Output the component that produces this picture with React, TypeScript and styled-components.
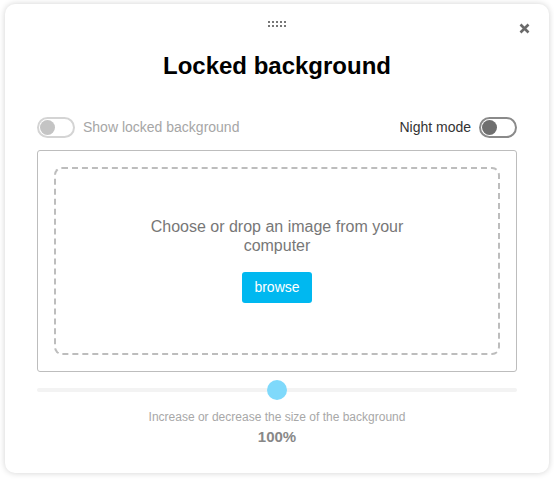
import React from "react";
import styled, { createGlobalStyle } from "styled-components";

const Global = createGlobalStyle`
  html, body { margin: 0; padding: 0; background: #ffffff; }
  body { font-family: "Liberation Sans", Arial, sans-serif; }
  * { box-sizing: border-box; }
`;

const Page = styled.div`
  width: 554px;
  height: 483px;
  padding: 4px 5px 10px 5px;
`;

const Card = styled.div`
  position: relative;
  width: 544px;
  height: 469px;
  background: #fff;
  border-radius: 10px;
  box-shadow: 0 0 6px rgba(0, 0, 0, 0.18);
  padding: 17px 32px 0 32px;
  display: flex;
  flex-direction: column;
`;

const Handle = styled.div`
  align-self: center;
  display: grid;
  grid-template-columns: repeat(5, 2px);
  grid-auto-rows: 2px;
  gap: 2px 2px;
  span { background: #777; display: block; }
`;

const Close = styled.button`
  position: absolute;
  top: 16px;
  right: 17px;
  width: 16px;
  height: 16px;
  padding: 0;
  border: none;
  background: none;
  display: flex;
  align-items: center;
  justify-content: center;
`;

const Title = styled.h1`
  margin: 25px 0 0 0;
  text-align: center;
  font-size: 24px;
  font-weight: 700;
  color: #000;
  line-height: 28px;
`;

const ToggleRow = styled.div`
  margin-top: 37px;
  display: flex;
  align-items: center;
  justify-content: space-between;
  height: 20px;
`;

const ToggleGroup = styled.label<{ $muted?: boolean }>`
  display: flex;
  align-items: center;
  gap: 8px;
  font-size: 14px;
  color: ${(p) => (p.$muted ? "#a6a6a6" : "#333")};
`;

const Switch = styled.span<{ $dark?: boolean }>`
  position: relative;
  width: 38px;
  height: 21px;
  border-radius: 11px;
  border: 2px solid ${(p) => (p.$dark ? "#8a8a8a" : "#d4d4d4")};
  background: #fff;
  &::after {
    content: "";
    position: absolute;
    left: 1px;
    top: 1px;
    width: 15px;
    height: 15px;
    border-radius: 50%;
    background: ${(p) => (p.$dark ? "#6f6f6f" : "#c4c4c4")};
  }
`;

const DropOuter = styled.div`
  margin-top: 13px;
  height: 222px;
  border: 1px solid #bdbdbd;
  border-radius: 3px;
  padding: 16px;
`;

const DropInner = styled.div`
  height: 100%;
  border: 2px dashed #bdbdbd;
  border-radius: 8px;
  display: flex;
  flex-direction: column;
  align-items: center;
  justify-content: center;
  padding-bottom: 3px;
`;

const DropText = styled.p`
  margin: 0;
  width: 270px;
  text-align: center;
  font-size: 16px;
  line-height: 19px;
  color: #777;
`;

const Browse = styled.button`
  margin-top: 17px;
  width: 70px;
  height: 31px;
  border: none;
  border-radius: 3px;
  background: #00b8f0;
  color: #fff;
  font-family: "Liberation Sans", Arial, sans-serif;
  font-size: 14px;
`;

const SliderWrap = styled.div`
  position: relative;
  margin-top: 8px;
  height: 20px;
  display: flex;
  align-items: center;
`;

const Track = styled.div`
  width: 100%;
  height: 4px;
  background: #f3f3f3;
  border-radius: 2px;
`;

const Thumb = styled.div`
  position: absolute;
  top: 0;
  width: 20px;
  height: 20px;
  border-radius: 50%;
  background: #7fd9fb;
  transform: translateX(-50%);
`;

const Hint = styled.p`
  margin: 10px 0 0 0;
  text-align: center;
  font-size: 12px;
  color: #a8a8a8;
`;

const Value = styled.p`
  margin: 4px 0 0 0;
  text-align: center;
  font-size: 15px;
  font-weight: 700;
  color: #888;
`;

export default function App() {
  const value = 0.5;
  return (
    <>
      <Global />
      <Page>
        <Card>
          <Handle>
            {Array.from({ length: 10 }).map((_, i) => (
              <span key={i} />
            ))}
          </Handle>
          <Close aria-label="close">
            <svg width="11" height="11" viewBox="0 0 11 11">
              <path d="M1.5 1.5 L9.5 9.5 M9.5 1.5 L1.5 9.5" stroke="#6a6a6a" strokeWidth="2.6" strokeLinecap="butt" />
            </svg>
          </Close>
          <Title>Locked background</Title>
          <ToggleRow>
            <ToggleGroup $muted>
              <Switch />
              Show locked background
            </ToggleGroup>
            <ToggleGroup>
              Night mode
              <Switch $dark />
            </ToggleGroup>
          </ToggleRow>
          <DropOuter>
            <DropInner>
              <DropText>Choose or drop an image from your computer</DropText>
              <Browse>browse</Browse>
            </DropInner>
          </DropOuter>
          <SliderWrap>
            <Track />
            <Thumb style={{ left: `${value * 100}%` }} />
          </SliderWrap>
          <Hint>Increase or decrease the size of the background</Hint>
          <Value>100%</Value>
        </Card>
      </Page>
    </>
  );
}
